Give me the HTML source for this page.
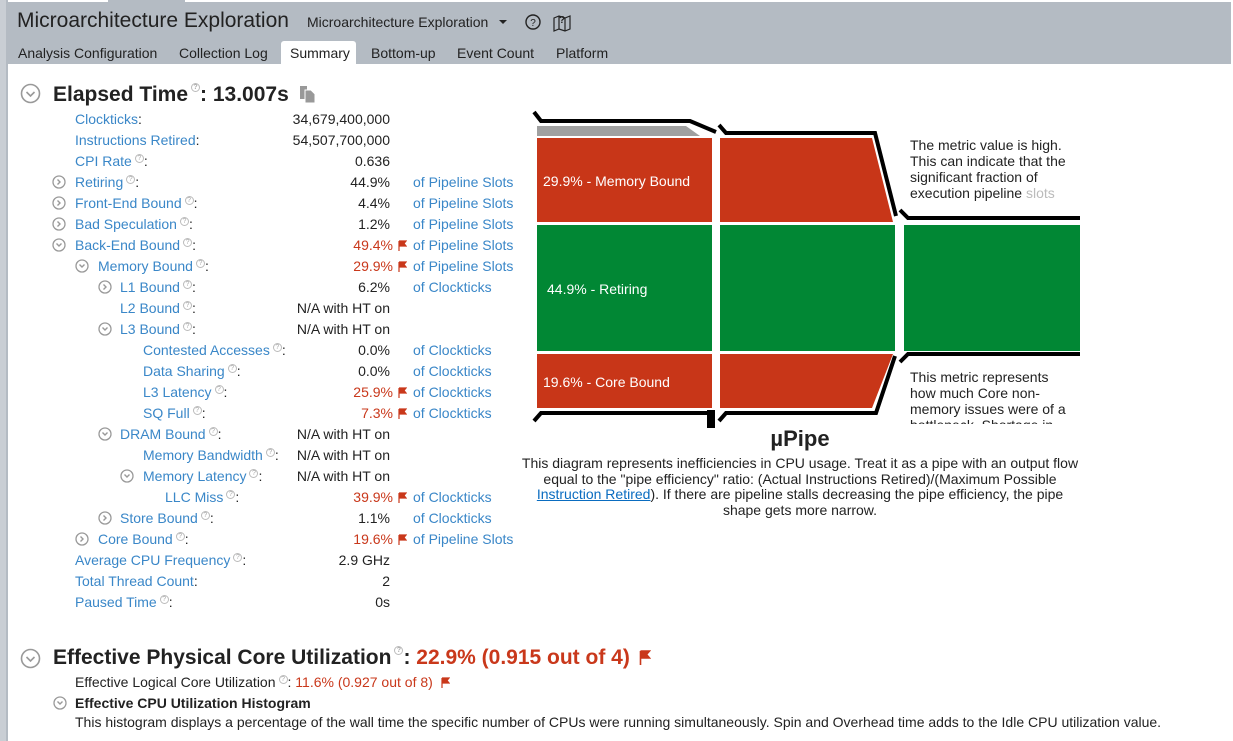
<!DOCTYPE html>
<html><head><meta charset="utf-8">
<style>
*{margin:0;padding:0;box-sizing:border-box}
body{width:1233px;height:741px;overflow:hidden;background:#fff;font-family:"Liberation Sans",Arial,sans-serif;font-size:14px;color:#222;position:relative}
.a{position:absolute;white-space:nowrap}
.hdr{position:absolute;left:8px;top:2px;width:1223px;height:62px;background:#b4bbc3}
.l{color:#3a87c8}
.r{color:#c9381b}
.v{position:absolute;right:843px;white-space:nowrap;text-align:right}
.u{position:absolute;left:413px;color:#3a87c8;white-space:nowrap}
.h{display:inline-block;width:9px;height:9px;border:1px solid #bbb;border-radius:50%;font-size:7px;line-height:7px;text-align:center;color:#aaa;vertical-align:6px;margin-left:3px}
.f{position:absolute;left:398px}
</style></head><body>
<div class="a" style="left:0;top:0;width:8px;height:741px;background:#c9ced4"></div>
<div class="a" style="left:6px;top:0;width:2px;height:741px;background:#b4bbc3"></div>
<div class="a" style="left:108px;top:0;width:77px;height:3px;background:#b4bbc3"></div>
<div class="hdr"></div>
<div class="a" style="left:17px;top:9px;font-size:21px;color:#222">Microarchitecture Exploration</div>
<div class="a" style="left:307px;top:14px;font-size:14px;color:#222">Microarchitecture Exploration</div>
<svg class="a" style="left:498px;top:18px" width="10" height="8"><path d="M1 2h8l-4 4z" fill="#222"/></svg>
<svg class="a" style="left:524px;top:13px" width="18" height="18"><circle cx="9" cy="9" r="7" fill="none" stroke="#222" stroke-width="1.4"/><text x="9" y="13" font-size="10" text-anchor="middle" font-family="Liberation Sans" fill="#222">?</text></svg>
<svg class="a" style="left:552px;top:12px" width="20" height="20"><path d="M2 6l5-2 6 2 5-2v13l-5 2-6-2-5 2z M7 4v13 M13 6v13" fill="none" stroke="#222" stroke-width="1.2"/><text x="10" y="11" font-size="10" font-weight="bold" text-anchor="middle" font-family="Liberation Sans" fill="#222">?</text></svg>
<div class="a" style="left:281px;top:41px;width:75px;height:23px;background:#fff;border-radius:3px 3px 0 0"></div>
<div class="a" style="left:18px;top:45px">Analysis Configuration</div>
<div class="a" style="left:179px;top:45px">Collection Log</div>
<div class="a" style="left:290px;top:45px">Summary</div>
<div class="a" style="left:371px;top:45px">Bottom-up</div>
<div class="a" style="left:457px;top:45px">Event Count</div>
<div class="a" style="left:556px;top:45px">Platform</div>

<svg class="a" style="left:20px;top:83px" width="22" height="22"><circle cx="10.5" cy="10.5" r="9" fill="none" stroke="#999" stroke-width="1.6"/><path d="M6.5 9l4 4 4-4" fill="none" stroke="#999" stroke-width="1.6"/></svg>
<div class="a" style="left:53px;top:83px;font-size:21px;font-weight:bold">Elapsed Time<span class="h" style="vertical-align:12px">?</span>: 13.007s</div>
<svg class="a" style="left:299px;top:85px" width="18" height="18"><path d="M1 1h7v13H1z" fill="#999"/><path d="M6 5h6l4 4v9H6z" fill="#999" stroke="#fff" stroke-width="1"/></svg>

<div class="a l" style="left:75px;top:111px">Clockticks<span style="color:#222">:</span></div><div class="v" style="top:111px">34,679,400,000</div>
<div class="a l" style="left:75px;top:132px">Instructions Retired<span style="color:#222">:</span></div><div class="v" style="top:132px">54,507,700,000</div>
<div class="a l" style="left:75px;top:153px">CPI Rate<span class="h">?</span><span style="color:#222">:</span></div><div class="v" style="top:153px">0.636</div>

<svg class="a" style="left:52px;top:175px" width="14" height="14"><circle cx="7" cy="7" r="6" fill="none" stroke="#999" stroke-width="1.3"/><path d="M5.5 4.5l2.5 2.5-2.5 2.5" fill="none" stroke="#999" stroke-width="1.4"/></svg>
<div class="a l" style="left:75px;top:174px">Retiring<span class="h">?</span><span style="color:#222">:</span></div><div class="v" style="top:174px">44.9%</div><div class="u" style="top:174px">of Pipeline Slots</div>
<svg class="a" style="left:52px;top:196px" width="14" height="14"><circle cx="7" cy="7" r="6" fill="none" stroke="#999" stroke-width="1.3"/><path d="M5.5 4.5l2.5 2.5-2.5 2.5" fill="none" stroke="#999" stroke-width="1.4"/></svg>
<div class="a l" style="left:75px;top:195px">Front-End Bound<span class="h">?</span><span style="color:#222">:</span></div><div class="v" style="top:195px">4.4%</div><div class="u" style="top:195px">of Pipeline Slots</div>
<svg class="a" style="left:52px;top:217px" width="14" height="14"><circle cx="7" cy="7" r="6" fill="none" stroke="#999" stroke-width="1.3"/><path d="M5.5 4.5l2.5 2.5-2.5 2.5" fill="none" stroke="#999" stroke-width="1.4"/></svg>
<div class="a l" style="left:75px;top:216px">Bad Speculation<span class="h">?</span><span style="color:#222">:</span></div><div class="v" style="top:216px">1.2%</div><div class="u" style="top:216px">of Pipeline Slots</div>
<svg class="a" style="left:52px;top:238px" width="14" height="14"><circle cx="7" cy="7" r="6" fill="none" stroke="#999" stroke-width="1.3"/><path d="M4.5 5.5l2.5 2.5 2.5-2.5" fill="none" stroke="#999" stroke-width="1.4"/></svg>
<div class="a l" style="left:75px;top:237px">Back-End Bound<span class="h">?</span><span style="color:#222">:</span></div><div class="v r" style="top:237px;right:840px">49.4%</div><svg class="f" style="top:240px" width="9" height="11"><path d="M1 1v10M1 1h7l-2 2.5 2 2.5H1" fill="#c9381b" stroke="#c9381b" stroke-width="1.2"/></svg><div class="u" style="top:237px">of Pipeline Slots</div>
<svg class="a" style="left:75px;top:259px" width="14" height="14"><circle cx="7" cy="7" r="6" fill="none" stroke="#999" stroke-width="1.3"/><path d="M4.5 5.5l2.5 2.5 2.5-2.5" fill="none" stroke="#999" stroke-width="1.4"/></svg>
<div class="a l" style="left:98px;top:258px">Memory Bound<span class="h">?</span><span style="color:#222">:</span></div><div class="v r" style="top:258px;right:840px">29.9%</div><svg class="f" style="top:261px" width="9" height="11"><path d="M1 1v10M1 1h7l-2 2.5 2 2.5H1" fill="#c9381b" stroke="#c9381b" stroke-width="1.2"/></svg><div class="u" style="top:258px">of Pipeline Slots</div>
<svg class="a" style="left:98px;top:280px" width="14" height="14"><circle cx="7" cy="7" r="6" fill="none" stroke="#999" stroke-width="1.3"/><path d="M5.5 4.5l2.5 2.5-2.5 2.5" fill="none" stroke="#999" stroke-width="1.4"/></svg>
<div class="a l" style="left:120px;top:279px">L1 Bound<span class="h">?</span><span style="color:#222">:</span></div><div class="v" style="top:279px">6.2%</div><div class="u" style="top:279px">of Clockticks</div>
<div class="a l" style="left:120px;top:300px">L2 Bound<span class="h">?</span><span style="color:#222">:</span></div><div class="v" style="top:300px">N/A with HT on</div>
<svg class="a" style="left:98px;top:322px" width="14" height="14"><circle cx="7" cy="7" r="6" fill="none" stroke="#999" stroke-width="1.3"/><path d="M4.5 5.5l2.5 2.5 2.5-2.5" fill="none" stroke="#999" stroke-width="1.4"/></svg>
<div class="a l" style="left:120px;top:321px">L3 Bound<span class="h">?</span><span style="color:#222">:</span></div><div class="v" style="top:321px">N/A with HT on</div>
<div class="a l" style="left:143px;top:342px">Contested Accesses<span class="h">?</span><span style="color:#222">:</span></div><div class="v" style="top:342px">0.0%</div><div class="u" style="top:342px">of Clockticks</div>
<div class="a l" style="left:143px;top:363px">Data Sharing<span class="h">?</span><span style="color:#222">:</span></div><div class="v" style="top:363px">0.0%</div><div class="u" style="top:363px">of Clockticks</div>
<div class="a l" style="left:143px;top:384px">L3 Latency<span class="h">?</span><span style="color:#222">:</span></div><div class="v r" style="top:384px;right:840px">25.9%</div><svg class="f" style="top:387px" width="9" height="11"><path d="M1 1v10M1 1h7l-2 2.5 2 2.5H1" fill="#c9381b" stroke="#c9381b" stroke-width="1.2"/></svg><div class="u" style="top:384px">of Clockticks</div>
<div class="a l" style="left:143px;top:405px">SQ Full<span class="h">?</span><span style="color:#222">:</span></div><div class="v r" style="top:405px;right:840px">7.3%</div><svg class="f" style="top:408px" width="9" height="11"><path d="M1 1v10M1 1h7l-2 2.5 2 2.5H1" fill="#c9381b" stroke="#c9381b" stroke-width="1.2"/></svg><div class="u" style="top:405px">of Clockticks</div>
<svg class="a" style="left:98px;top:427px" width="14" height="14"><circle cx="7" cy="7" r="6" fill="none" stroke="#999" stroke-width="1.3"/><path d="M4.5 5.5l2.5 2.5 2.5-2.5" fill="none" stroke="#999" stroke-width="1.4"/></svg>
<div class="a l" style="left:120px;top:426px">DRAM Bound<span class="h">?</span><span style="color:#222">:</span></div><div class="v" style="top:426px">N/A with HT on</div>
<div class="a l" style="left:143px;top:447px">Memory Bandwidth<span class="h">?</span><span style="color:#222">:</span></div><div class="v" style="top:447px">N/A with HT on</div>
<svg class="a" style="left:120px;top:469px" width="14" height="14"><circle cx="7" cy="7" r="6" fill="none" stroke="#999" stroke-width="1.3"/><path d="M4.5 5.5l2.5 2.5 2.5-2.5" fill="none" stroke="#999" stroke-width="1.4"/></svg>
<div class="a l" style="left:143px;top:468px">Memory Latency<span class="h">?</span><span style="color:#222">:</span></div><div class="v" style="top:468px">N/A with HT on</div>
<div class="a l" style="left:165px;top:489px">LLC Miss<span class="h">?</span><span style="color:#222">:</span></div><div class="v r" style="top:489px;right:840px">39.9%</div><svg class="f" style="top:492px" width="9" height="11"><path d="M1 1v10M1 1h7l-2 2.5 2 2.5H1" fill="#c9381b" stroke="#c9381b" stroke-width="1.2"/></svg><div class="u" style="top:489px">of Clockticks</div>
<svg class="a" style="left:98px;top:511px" width="14" height="14"><circle cx="7" cy="7" r="6" fill="none" stroke="#999" stroke-width="1.3"/><path d="M5.5 4.5l2.5 2.5-2.5 2.5" fill="none" stroke="#999" stroke-width="1.4"/></svg>
<div class="a l" style="left:120px;top:510px">Store Bound<span class="h">?</span><span style="color:#222">:</span></div><div class="v" style="top:510px">1.1%</div><div class="u" style="top:510px">of Clockticks</div>
<svg class="a" style="left:75px;top:532px" width="14" height="14"><circle cx="7" cy="7" r="6" fill="none" stroke="#999" stroke-width="1.3"/><path d="M5.5 4.5l2.5 2.5-2.5 2.5" fill="none" stroke="#999" stroke-width="1.4"/></svg>
<div class="a l" style="left:98px;top:531px">Core Bound<span class="h">?</span><span style="color:#222">:</span></div><div class="v r" style="top:531px;right:840px">19.6%</div><svg class="f" style="top:534px" width="9" height="11"><path d="M1 1v10M1 1h7l-2 2.5 2 2.5H1" fill="#c9381b" stroke="#c9381b" stroke-width="1.2"/></svg><div class="u" style="top:531px">of Pipeline Slots</div>
<div class="a l" style="left:75px;top:552px">Average CPU Frequency<span class="h">?</span><span style="color:#222">:</span></div><div class="v" style="top:552px">2.9 GHz</div>
<div class="a l" style="left:75px;top:573px">Total Thread Count<span style="color:#222">:</span></div><div class="v" style="top:573px">2</div>
<div class="a l" style="left:75px;top:594px">Paused Time<span class="h">?</span><span style="color:#222">:</span></div><div class="v" style="top:594px">0s</div>

<svg class="a" style="left:520px;top:100px" width="570" height="330">
<g transform="translate(-520,-100)">
<path d="M537 126H686L700 136H537z" fill="#a0a0a0"/>
<rect x="537" y="138" width="175" height="84" fill="#c83618"/>
<rect x="537" y="225" width="175" height="126" fill="#018734"/>
<rect x="537" y="354" width="175" height="54" fill="#c83618"/>
<path d="M720 138H872L893 222H720z" fill="#c83618"/>
<rect x="720" y="225" width="175" height="126" fill="#018734"/>
<path d="M720 354H893L872 408H720z" fill="#c83618"/>
<rect x="904" y="225" width="176" height="126" fill="#018734"/>
<g fill="none" stroke="#000" stroke-width="4">
<path d="M534 112L541 121H690L716 132"/>
<path d="M719 125L726 133H875L896 216"/>
<path d="M900 210L908 218H1080"/>
<path d="M534 421L541 413H711"/>
<path d="M719 421L726 413H876L895 356"/>
<path d="M900 362L908 354H1080"/>
</g>
<rect x="707" y="410" width="8" height="18" fill="#000"/>
<text x="543" y="186" fill="#fff" font-size="14" font-family="Liberation Sans">29.9% - Memory Bound</text>
<text x="547" y="294" fill="#fff" font-size="14" font-family="Liberation Sans">44.9% - Retiring</text>
<text x="543" y="387" fill="#fff" font-size="14" font-family="Liberation Sans">19.6% - Core Bound</text>
</g>
</svg>
<div class="a" style="left:910px;top:137px;line-height:16px;font-size:14px">The metric value is high.<br>This can indicate that the<br>significant fraction of<br>execution pipeline <span style="color:#bbb">slots</span></div>
<div class="a" style="left:910px;top:369px;width:180px;height:55px;overflow:hidden;line-height:16px;font-size:14px">This metric represents<br>how much Core non-<br>memory issues were of a<br>bottleneck. Shortage in</div>
<div class="a" style="left:520px;top:426px;width:560px;text-align:center;font-size:22px;font-weight:bold">µPipe</div>
<div class="a" style="left:521px;top:456px;width:558px;text-align:center;white-space:normal;line-height:15.7px;font-size:14px">This diagram represents inefficiencies in CPU usage. Treat it as a pipe with an output flow equal to the "pipe efficiency" ratio: (Actual Instructions Retired)/(Maximum Possible <span style="color:#0a6cc0;text-decoration:underline">Instruction Retired</span>). If there are pipeline stalls decreasing the pipe efficiency, the pipe shape gets more narrow.</div>

<svg class="a" style="left:20px;top:648px" width="22" height="22"><circle cx="10.5" cy="10.5" r="9" fill="none" stroke="#999" stroke-width="1.6"/><path d="M6.5 9l4 4 4-4" fill="none" stroke="#999" stroke-width="1.6"/></svg>
<div class="a" style="left:53px;top:646px;font-size:21px;font-weight:bold">Effective Physical Core Utilization<span class="h" style="vertical-align:12px">?</span>: <span class="r">22.9% (0.915 out of 4)</span></div>
<svg class="a" style="left:639px;top:650px" width="12" height="15"><path d="M1.5 1v14M1.5 1h9l-3 3.5 3 3.5h-9" fill="#c9381b" stroke="#c9381b" stroke-width="1.6"/></svg>
<div class="a" style="left:75px;top:674px">Effective Logical Core Utilization<span class="h">?</span>: <span class="r">11.6% (0.927 out of 8)</span></div>
<svg class="a" style="left:441px;top:677px" width="9" height="11"><path d="M1 1v10M1 1h7l-2 2.5 2 2.5H1" fill="#c9381b" stroke="#c9381b" stroke-width="1.2"/></svg>
<svg class="a" style="left:53px;top:696px" width="14" height="14"><circle cx="7" cy="7" r="6" fill="none" stroke="#999" stroke-width="1.3"/><path d="M4.5 5.5l2.5 2.5 2.5-2.5" fill="none" stroke="#999" stroke-width="1.4"/></svg>
<div class="a" style="left:75px;top:695px;font-weight:bold">Effective CPU Utilization Histogram</div>
<div class="a" style="left:75px;top:714px">This histogram displays a percentage of the wall time the specific number of CPUs were running simultaneously. Spin and Overhead time adds to the Idle CPU utilization value.</div>
</body></html>
